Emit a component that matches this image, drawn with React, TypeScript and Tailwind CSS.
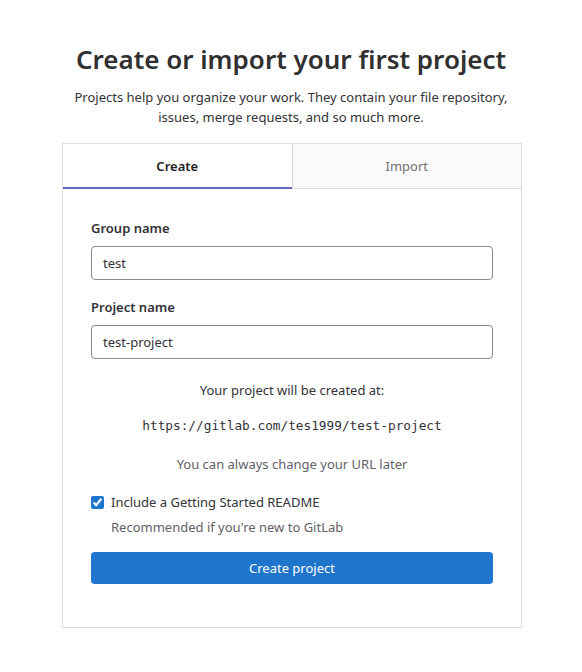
import React from "react";

export default function App() {
  return (
    <div className="w-[582px] h-[672px] bg-white text-[#333238]" style={{ fontFamily: '"Noto Sans", "Open Sans", sans-serif' }}>
      <div className="flex flex-col items-center pt-[38px]">
        <h1 className="text-[26px] leading-[42px] font-semibold text-[#303030]">Create or import your first project</h1>
        <p className="mt-[7px] text-[13px] leading-[20px] text-center text-[#333238] w-[460px]">
          Projects help you organize your work. They contain your file repository, issues, merge requests, and so much more.
        </p>
        <div className="mt-[16px] ml-[2px] w-[460px] border border-[#dcdcde] flex flex-col">
          <div className="flex h-[45px]">
            <div className="flex-1 flex items-center justify-center pt-[2px] text-[13px] font-semibold text-[#1f1e24] border-b-2 border-[#6666c4] bg-white">Create</div>
            <div className="flex-1 flex items-center justify-center pt-[2px] text-[13px] text-[#737278] bg-[#fafafa] border-l border-b border-[#dcdcde]">Import</div>
          </div>
          <div className="px-[28px] pt-[29px] pb-[43px] flex flex-col">
            <label className="text-[13px] font-semibold text-[#333238] leading-[20px]">Group name</label>
            <div className="mt-[8px] h-[34px] border border-[#89888d] rounded-[4px] flex items-center pt-[1px] px-[11px] text-[13px]">test</div>
            <label className="mt-[17px] text-[13px] font-semibold text-[#333238] leading-[20px]">Project name</label>
            <div className="mt-[8px] h-[34px] border border-[#89888d] rounded-[4px] flex items-center pt-[1px] px-[11px] text-[13px]">test-project</div>
            <p className="mt-[21px] text-center text-[13px] leading-[20px]">Your project will be created at:</p>
            <p className="mt-[16px] text-center text-[12.75px] leading-[20px]" style={{ fontFamily: '"DejaVu Sans Mono", monospace' }}>https://gitlab.com/tes1999/test-project</p>
            <p className="mt-[18px] text-center text-[13px] leading-[20px] text-[#626168]">You can always change your URL later</p>
            <div className="mt-[18px] flex items-center gap-[7px]">
              <input type="checkbox" defaultChecked className="w-[13px] h-[13px] accent-[#1f75cb]" />
              <span className="text-[13px] leading-[20px]">Include a Getting Started README</span>
            </div>
            <p className="mt-[5px] ml-[20px] text-[13px] leading-[20px] text-[#626168]">Recommended if you're new to GitLab</p>
            <button className="mt-[15px] h-[32px] rounded-[4px] bg-[#1f75cb] text-white text-[13px] flex items-center justify-center pt-[1px]">Create project</button>
          </div>
        </div>
      </div>
    </div>
  );
}
